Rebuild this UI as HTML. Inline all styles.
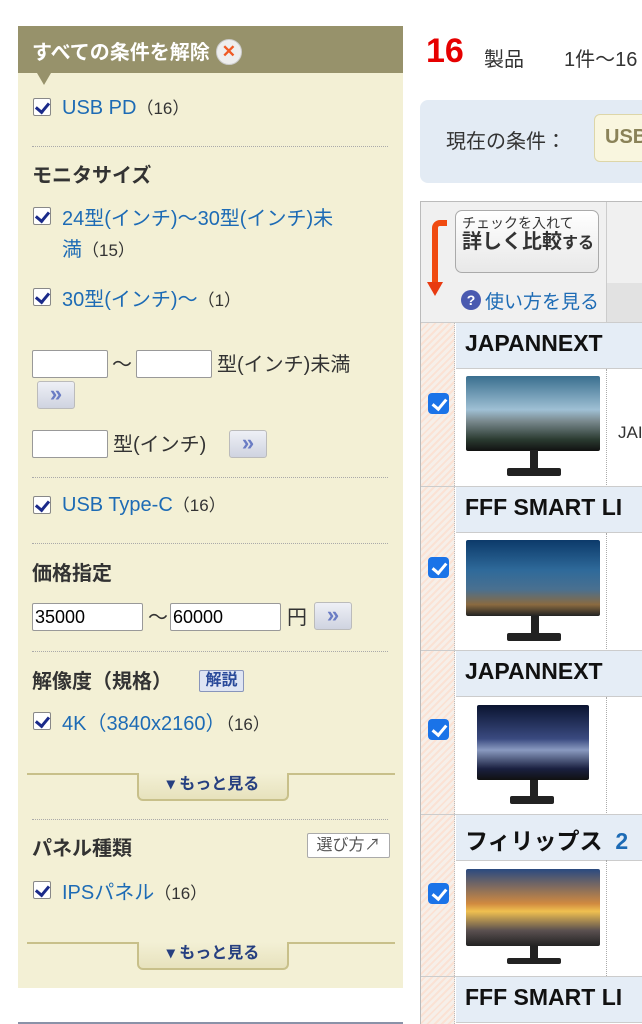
<!DOCTYPE html>
<html><head><meta charset="utf-8"><style>
*{margin:0;padding:0;box-sizing:border-box}
body{width:642px;height:1024px;overflow:hidden;background:#fff;font-family:"Liberation Sans","Noto Sans CJK JP",sans-serif;position:relative}
.a{position:absolute;white-space:nowrap}
#side{position:absolute;left:18px;top:26px;width:385px;height:962px;background:#f3f0d5}
#hd{position:absolute;left:18px;top:26px;width:385px;height:47px;background:#97926b;color:#fff;font-weight:bold;font-size:20px;padding:10px 0 0 14px}
.x{display:inline-block;width:26px;height:26px;border-radius:50%;background:#eee;border:1px solid #ccc;color:#f05a24;font-size:17px;text-align:center;line-height:24px;vertical-align:2px;margin-left:6px}
.tri{position:absolute;left:37px;top:73px;border-left:7px solid transparent;border-right:7px solid transparent;border-top:12px solid #97926b}
.cb{position:absolute;width:18px;height:18px;border:1px solid #888;background:#fff;border-radius:2px}
.cb::after{content:"";position:absolute;left:4px;top:1px;width:6px;height:10px;border:solid #1a2a8a;border-width:0 3px 3px 0;transform:rotate(40deg)}
.lk{color:#1d6bb5;font-size:20px}
.n{color:#333;font-size:17px}
.h{font-weight:bold;color:#333;font-size:20px}
.dot{position:absolute;left:32px;width:356px;border-top:1px dotted #aaa}
.in{position:absolute;height:28px;background:#fff;border:1px solid #999;border-radius:2px;font-size:18px;padding-left:2px;line-height:26px;color:#000}
.go{position:absolute;width:38px;height:28px;background:linear-gradient(#eef0f6,#cfd3e0);border:1px solid #bbb;border-radius:3px;color:#6a7cc4;font-weight:bold;font-size:22px;text-align:center;line-height:24px}
.t{color:#333;font-size:20px}
.more{position:absolute;left:27px;width:368px;height:30px}
.more .l{position:absolute;left:0;right:0;top:0;border-top:2px solid #c8c08a}
.more .tab{position:absolute;left:110px;width:152px;top:0;height:28px;background:linear-gradient(#f3f0d5,#e7e2bd);border:2px solid #c8c08a;border-top:none;border-radius:0 0 6px 6px;text-align:center;color:#263f80;font-weight:bold;font-size:16px;line-height:24px}
.cbb{position:absolute;left:428px;width:21px;height:21px;background:#1a73e8;border-radius:4px}
.cbb::after{content:"";position:absolute;left:7px;top:3px;width:6px;height:11px;border:solid #fff;border-width:0 3px 3px 0;transform:rotate(40deg)}
.nb{position:absolute;left:456px;width:186px;height:46px;background:#e5edf6;border-bottom:1px solid #ccc;font-weight:bold;font-size:23px;color:#111;padding:7px 0 0 9px;white-space:nowrap}
.img{position:absolute;left:466px;width:134px;height:78px;border-radius:2px}
.stand{position:absolute;width:8px;height:20px;background:#222}
.base{position:absolute;width:54px;height:8px;background:#222;border-radius:2px}
</style></head><body>
<div id="side"></div>
<div id="hd">すべての条件を解除<span class="x">✕</span></div>
<div class="tri"></div>

<div class="cb" style="left:33px;top:98px"></div>
<div class="a" style="left:62px;top:94px"><span class="lk">USB PD</span><span class="n">（16）</span></div>
<div class="dot" style="top:146px"></div>
<div class="a h" style="left:32px;top:159px">モニタサイズ</div>
<div class="cb" style="left:33px;top:207px"></div>
<div class="a lk" style="left:62px;top:202px">24型(インチ)～30型(インチ)未</div>
<div class="a" style="left:62px;top:233px"><span class="lk">満</span><span class="n">（15）</span></div>
<div class="cb" style="left:33px;top:288px"></div>
<div class="a" style="left:62px;top:283px"><span class="lk">30型(インチ)～</span><span class="n">（1）</span></div>
<div class="in" style="left:32px;top:350px;width:76px"></div>
<div class="a t" style="left:112px;top:348px">～</div>
<div class="in" style="left:136px;top:350px;width:76px"></div>
<div class="a t" style="left:217px;top:348px">型(インチ)未満</div>
<div class="go" style="left:37px;top:381px">»</div>
<div class="in" style="left:32px;top:430px;width:76px"></div>
<div class="a t" style="left:113px;top:428px">型(インチ)</div>
<div class="go" style="left:229px;top:430px">»</div>
<div class="dot" style="top:477px"></div>
<div class="cb" style="left:33px;top:496px"></div>
<div class="a" style="left:62px;top:491px"><span class="lk">USB Type-C</span><span class="n">（16）</span></div>
<div class="dot" style="top:543px"></div>
<div class="a h" style="left:32px;top:557px">価格指定</div>
<div class="in" style="left:32px;top:603px;width:111px">35000</div>
<div class="a t" style="left:148px;top:601px">～</div>
<div class="in" style="left:170px;top:603px;width:111px">60000</div>
<div class="a t" style="left:287px;top:601px">円</div>
<div class="go" style="left:314px;top:602px">»</div>
<div class="dot" style="top:651px"></div>
<div class="a h" style="left:32px;top:665px">解像度（規格）</div>
<div class="a" style="left:199px;top:670px;width:45px;height:22px;border:1px solid #8895bb;background:#dfe5f3;color:#2a4a9a;font-weight:bold;font-size:16px;text-align:center;line-height:20px;border-radius:2px">解説</div>
<div class="cb" style="left:33px;top:712px"></div>
<div class="a" style="left:62px;top:707px"><span class="lk">4K（3840x2160）</span><span class="n">（16）</span></div>
<div class="more" style="top:773px"><div class="l"></div><div class="tab">▾ もっと見る</div></div>
<div class="dot" style="top:819px"></div>
<div class="a h" style="left:32px;top:832px">パネル種類</div>
<div class="a" style="left:307px;top:833px;width:83px;height:25px;border:1px solid #aaa;background:#fff;color:#555;font-size:16px;text-align:center;line-height:23px;border-radius:2px">選び方↗</div>
<div class="cb" style="left:33px;top:881px"></div>
<div class="a" style="left:62px;top:876px"><span class="lk">IPSパネル</span><span class="n">（16）</span></div>
<div class="more" style="top:942px"><div class="l"></div><div class="tab">▾ もっと見る</div></div>
<div class="a" style="left:18px;top:1022px;width:385px;border-top:2px solid #8a92a8"></div>

<!-- main -->
<div class="a" style="left:426px;top:32px;color:#e60000;font-weight:bold;font-size:34px">16</div>
<div class="a" style="left:484px;top:43px;color:#333;font-size:20px">製品</div>
<div class="a" style="left:564px;top:43px;color:#333;font-size:20px">1件～16</div>
<div class="a" style="left:420px;top:100px;width:240px;height:83px;background:#e3ebf4;border-radius:8px"></div>
<div class="a" style="left:446px;top:125px;color:#333;font-size:20px">現在の条件：</div>
<div class="a" style="left:594px;top:114px;width:60px;height:48px;background:#f9f6df;border:1px solid #ddd6a8;border-radius:6px;color:#8a8258;font-weight:bold;font-size:20px;padding:11px 0 0 10px">USB</div>

<div class="a" style="left:420px;top:201px;width:222px;height:823px;border-left:1px solid #bbb;border-top:1px solid #bbb"></div>
<div class="a" style="left:421px;top:202px;width:186px;height:120px;background:#f0f0f0;border-right:1px solid #ccc"></div>
<div class="a" style="left:607px;top:202px;width:35px;height:120px;background:#f0f0f0"></div>
<div class="a" style="left:607px;top:283px;width:35px;height:39px;background:#e2e2e2"></div>
<div class="a" style="left:455px;top:210px;width:144px;height:63px;background:linear-gradient(#fff,#e8e8e8);border:1px solid #aaa;border-radius:7px;padding:5px 0 0 6px;color:#333;line-height:1.1">
<div style="font-size:14px">チェックを入れて</div><div style="font-size:20px;font-weight:bold">詳しく比較<span style="font-size:16px">する</span></div></div>
<div class="a" style="left:432px;top:220px;width:15px;height:70px;border-left:6px solid #f04a10;border-top:6px solid #f04a10;border-radius:8px 0 0 0"></div>
<div class="a" style="left:427px;top:282px;border-left:8px solid transparent;border-right:8px solid transparent;border-top:14px solid #e83a10"></div>
<div class="a" style="left:461px;top:290px;width:20px;height:20px;border-radius:50%;background:#4a5ab0;color:#fff;font-size:14px;text-align:center;line-height:20px;font-weight:bold">?</div>
<div class="a" style="left:485px;top:287px;color:#1d6bb5;font-size:19px">使い方を見る</div>

<div class="a" style="left:421px;top:322px;width:34px;height:702px;background:repeating-linear-gradient(135deg,#fbe2d4 0 2px,#f6efe9 2px 5px);border-right:1px dotted #bbb"></div>

<div class="a" style="left:421px;top:322px;width:221px;border-top:1px solid #ccc"></div>
<div class="nb" style="top:323px">JAPANNEXT</div>
<div class="cbb" style="top:393px"></div>
<div class="a" style="left:606px;top:369px;height:116px;border-left:1px dotted #aaa"></div>
<div class="img" style="top:376px;height:75px;background:linear-gradient(#3a6f8f,#9fc0d4 45%,#7a8a8f 60%,#2a3a30 85%,#111)"></div>
<div class="stand" style="left:530px;top:450px;height:18px"></div><div class="base" style="left:507px;top:468px"></div>
<div class="a" style="left:618px;top:423px;font-size:17px;color:#333">JAI</div>

<div class="a" style="left:421px;top:486px;width:221px;border-top:1px solid #ccc"></div>
<div class="nb" style="top:487px">FFF SMART LI</div>
<div class="cbb" style="top:557px"></div>
<div class="a" style="left:606px;top:533px;height:116px;border-left:1px dotted #aaa"></div>
<div class="img" style="top:540px;height:76px;background:linear-gradient(#0c3a6a,#2f6a9a 40%,#4a7090 65%,#8a6a40 85%,#222)"></div>
<div class="stand" style="left:531px;top:616px"></div><div class="base" style="left:507px;top:633px"></div>

<div class="a" style="left:421px;top:650px;width:221px;border-top:1px solid #ccc"></div>
<div class="nb" style="top:651px">JAPANNEXT</div>
<div class="cbb" style="top:719px"></div>
<div class="a" style="left:606px;top:697px;height:116px;border-left:1px dotted #aaa"></div>
<div class="img" style="left:477px;width:112px;top:705px;height:75px;background:linear-gradient(#0a1430,#3a4a80 45%,#8a9ac0 60%,#1a2040 85%,#111)"></div>
<div class="stand" style="left:530px;top:780px"></div><div class="base" style="left:510px;top:796px;width:44px"></div>

<div class="a" style="left:421px;top:814px;width:221px;border-top:1px solid #ccc"></div>
<div class="nb" style="top:815px">フィリップス&nbsp;&nbsp;<span style="color:#1d6bb5">2</span></div>
<div class="cbb" style="top:883px"></div>
<div class="a" style="left:606px;top:860px;height:116px;border-left:1px dotted #aaa"></div>
<div class="img" style="top:869px;height:77px;background:linear-gradient(#2a4a80,#d08a40 45%,#f0c050 55%,#5a5050 80%,#222)"></div>
<div class="stand" style="left:530px;top:946px;height:12px"></div><div class="base" style="left:507px;top:958px;height:6px"></div>

<div class="a" style="left:421px;top:976px;width:221px;border-top:1px solid #ccc"></div>
<div class="nb" style="top:977px">FFF SMART LI</div>
</body></html>
